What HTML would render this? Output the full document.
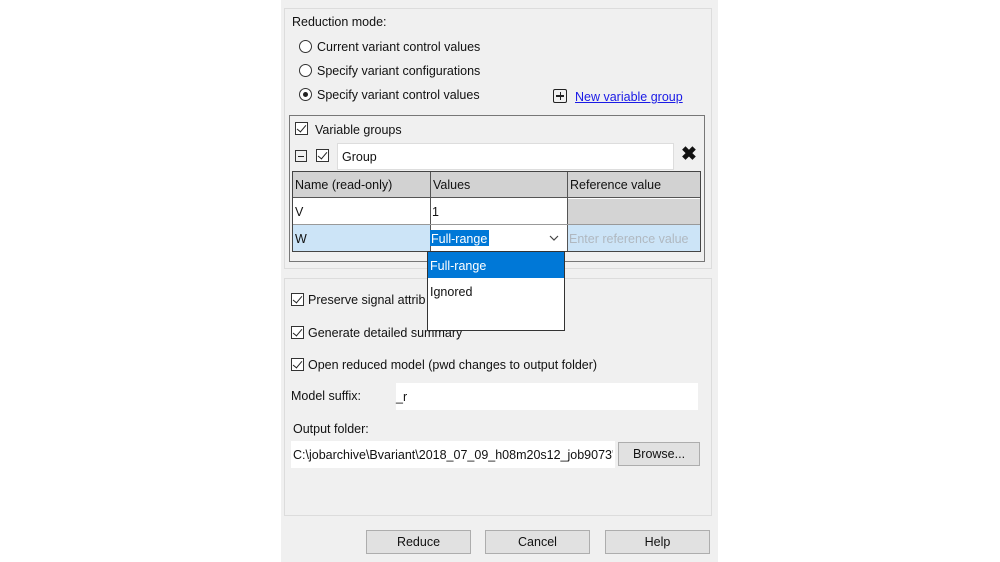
<!DOCTYPE html>
<html><head><meta charset="utf-8"><style>
*{box-sizing:border-box;margin:0;padding:0}
body{width:1000px;height:562px;background:#fff;position:relative;overflow:hidden;font-family:"Liberation Sans",sans-serif;font-size:12.5px;color:#111}
.a{position:absolute}
.dlg{left:281px;top:0;width:437px;height:562px;background:#f0f0f0}
.pan{border:1px solid #dcdcdc;background:#f0f0f0}
.t{position:absolute;white-space:nowrap;line-height:14px}
.rad{position:absolute;width:13px;height:13px;border:1px solid #333;border-radius:50%;background:#fff}
.cb{position:absolute;width:13px;height:13px;border:1px solid #333;background:#fff}
.cb:after{content:"";position:absolute;left:3px;top:0px;width:4px;height:8px;border-right:1.5px solid #222;border-bottom:1.5px solid #222;transform:rotate(40deg)}
.btn{position:absolute;background:#e1e1e1;border:1px solid #adadad;text-align:center;line-height:22px}
.fld{position:absolute;background:#fff}
</style></head><body>
<div class="a dlg"></div>
<div class="a pan" style="left:284px;top:8px;width:428px;height:261px"></div>
<div class="t" style="left:292px;top:15px">Reduction mode:</div>
<div class="rad" style="left:299px;top:40px"></div><div class="t" style="left:317px;top:40px">Current variant control values</div>
<div class="rad" style="left:299px;top:64px"></div><div class="t" style="left:317px;top:64px">Specify variant configurations</div>
<div class="rad" style="left:299px;top:88px"></div><div class="a" style="left:303px;top:92px;width:5px;height:5px;border-radius:50%;background:#222"></div><div class="t" style="left:317px;top:88px">Specify variant control values</div>
<div class="a" style="left:553px;top:89px;width:14px;height:14px;border:1.5px solid #222;border-radius:2px"></div>
<div class="a" style="left:556px;top:95px;width:8px;height:1.5px;background:#222"></div>
<div class="a" style="left:559.5px;top:92px;width:1.5px;height:8px;background:#222"></div>
<div class="t" style="left:575px;top:90px;color:#1a1ae6;text-decoration:underline">New variable group</div>
<div class="a" style="left:289px;top:115px;width:416px;height:147px;border:1px solid #777;background:#f0f0f0"></div>
<div class="cb" style="left:295px;top:122px"></div><div class="t" style="left:315px;top:123px">Variable groups</div>
<div class="a" style="left:295px;top:150px;width:12px;height:12px;border:1px solid #333"></div><div class="a" style="left:298px;top:155.5px;width:6px;height:1.3px;background:#222"></div>
<div class="cb" style="left:316px;top:149px"></div>
<div class="fld" style="left:337px;top:143px;width:337px;height:27px;border:1px solid #ddd"></div>
<div class="t" style="left:342px;top:150px">Group</div>
<div class="t" style="left:681px;top:145px;font-size:19px;font-weight:bold;line-height:20px">✖</div>
<div class="a" style="left:292px;top:171px;width:409px;height:81px;border:1.5px solid #444;background:#fff"></div>
<div class="a" style="left:293px;top:172px;width:407px;height:26px;background:#d2d2d2;border-bottom:1px solid #555"></div>
<div class="a" style="left:430px;top:172px;width:1px;height:79px;background:#555"></div>
<div class="a" style="left:567px;top:172px;width:1px;height:79px;background:#555"></div>
<div class="t" style="left:295px;top:178px">Name (read-only)</div>
<div class="t" style="left:433px;top:178px">Values</div>
<div class="t" style="left:570px;top:178px">Reference value</div>
<div class="a" style="left:568px;top:199px;width:132px;height:25px;background:#d4d4d4"></div>
<div class="a" style="left:293px;top:224px;width:407px;height:1px;background:#999"></div>
<div class="t" style="left:295px;top:205px">V</div><div class="t" style="left:432px;top:205px">1</div>
<div class="a" style="left:293px;top:225px;width:137px;height:26px;background:#cce4f7"></div>
<div class="a" style="left:568px;top:225px;width:132px;height:26px;background:#cce4f7"></div>
<div class="t" style="left:295px;top:232px">W</div>
<div class="a" style="left:430px;top:230px;width:59px;height:16px;background:#0078d7"></div>
<div class="t" style="left:431px;top:232px;color:#fff">Full-range</div>
<svg class="a" style="left:549px;top:235px" width="10" height="6"><path d="M1 1 L5 5 L9 1" fill="none" stroke="#444" stroke-width="1.2"/></svg>
<div class="t" style="left:569px;top:232px;color:#b0b8c0">Enter reference value</div>
<div class="a pan" style="left:284px;top:278px;width:428px;height:238px"></div>
<div class="cb" style="left:291px;top:293px"></div><div class="t" style="left:308px;top:293px">Preserve signal attrib</div>
<div class="cb" style="left:291px;top:326px"></div><div class="t" style="left:308px;top:326px">Generate detailed summary</div>
<div class="cb" style="left:291px;top:358px"></div><div class="t" style="left:308px;top:358px">Open reduced model (pwd changes to output folder)</div>
<div class="t" style="left:291px;top:389px">Model suffix:</div>
<div class="fld" style="left:396px;top:383px;width:302px;height:27px"></div>
<div class="t" style="left:396px;top:390px">_r</div>
<div class="t" style="left:293px;top:422px">Output folder:</div>
<div class="fld" style="left:291px;top:441px;width:324px;height:27px"></div>
<div class="t" style="left:293px;top:448px;width:320px;overflow:hidden">C:\jobarchive\Bvariant\2018_07_09_h08m20s12_job9073'</div>
<div class="btn" style="left:618px;top:442px;width:82px;height:24px">Browse...</div>
<div class="a" style="left:427px;top:251px;width:138px;height:80px;background:#fff;border:1.5px solid #333"></div>
<div class="a" style="left:428px;top:252px;width:136px;height:26px;background:#0078d7"></div>
<div class="t" style="left:430px;top:259px;color:#fff">Full-range</div>
<div class="t" style="left:430px;top:285px">Ignored</div>
<div class="btn" style="left:366px;top:530px;width:105px;height:24px">Reduce</div>
<div class="btn" style="left:485px;top:530px;width:105px;height:24px">Cancel</div>
<div class="btn" style="left:605px;top:530px;width:105px;height:24px">Help</div>
</body></html>
